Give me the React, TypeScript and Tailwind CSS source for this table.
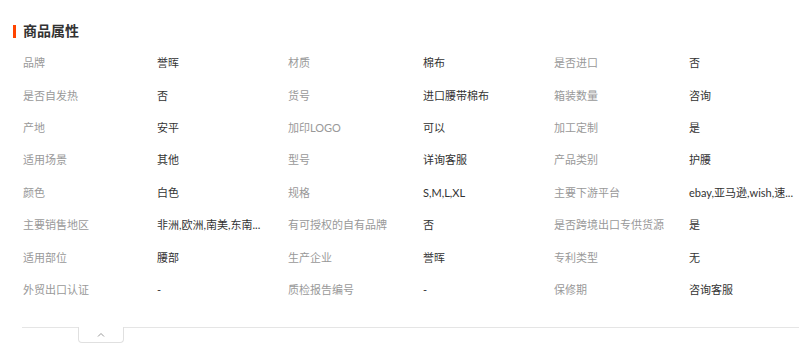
import React from 'react';

const rows: [string, string][][] = [
  [['品牌', '誉晖'], ['材质', '棉布'], ['是否进口', '否']],
  [['是否自发热', '否'], ['货号', '进口腰带棉布'], ['箱装数量', '咨询']],
  [['产地', '安平'], ['加印LOGO', '可以'], ['加工定制', '是']],
  [['适用场景', '其他'], ['型号', '详询客服'], ['产品类别', '护腰']],
  [['颜色', '白色'], ['规格', 'S,M,L,XL'], ['主要下游平台', 'ebay,亚马逊,wish,速...']],
  [['主要销售地区', '非洲,欧洲,南美,东南...'], ['有可授权的自有品牌', '否'], ['是否跨境出口专供货源', '是']],
  [['适用部位', '腰部'], ['生产企业', '誉晖'], ['专利类型', '无']],
  [['外贸出口认证', '-'], ['质检报告编号', '-'], ['保修期', '咨询客服']],
];

const App: React.FC = () => {
  return (
    <div
      className="w-[799px] h-[355px] bg-white overflow-hidden"
      style={{ fontFamily: 'Lato, "Noto Sans CJK SC", sans-serif' }}
    >
      <div className="pt-[24px] pl-[13px] flex items-center">
        <div className="w-[3px] h-[13px] bg-[#ff4400]" />
        <div className="ml-[7px] text-[14px] font-bold text-[#333] leading-[14px]">商品属性</div>
      </div>

      <div className="mt-[9px] pl-[23px]">
        {rows.map((row, i) => (
          <div key={i} className="grid grid-cols-[134px_131px_135px_131px_135px_1fr] h-[32.43px] items-center text-[11px] leading-[16px]">
            {row.map(([k, v], j) => (
              <React.Fragment key={j}>
                <div className="text-[#999] whitespace-nowrap">{k}</div>
                <div className="text-[#333] whitespace-nowrap">{v}</div>
              </React.Fragment>
            ))}
          </div>
        ))}
      </div>

      <div className="mt-[21px] ml-[22px] border-t border-[#e5e5e5] relative">
        <div className="absolute left-[56px] -top-px w-[46px] h-[16px] bg-white border border-t-0 border-[#e0e0e0] rounded-b-[4px] flex items-center justify-center">
          <svg width="8" height="5" viewBox="0 0 8 5" fill="none">
            <path d="M1 4.5L4 1.5L7 4.5" stroke="#999" strokeWidth="1" />
          </svg>
        </div>
      </div>
    </div>
  );
};

export default App;
